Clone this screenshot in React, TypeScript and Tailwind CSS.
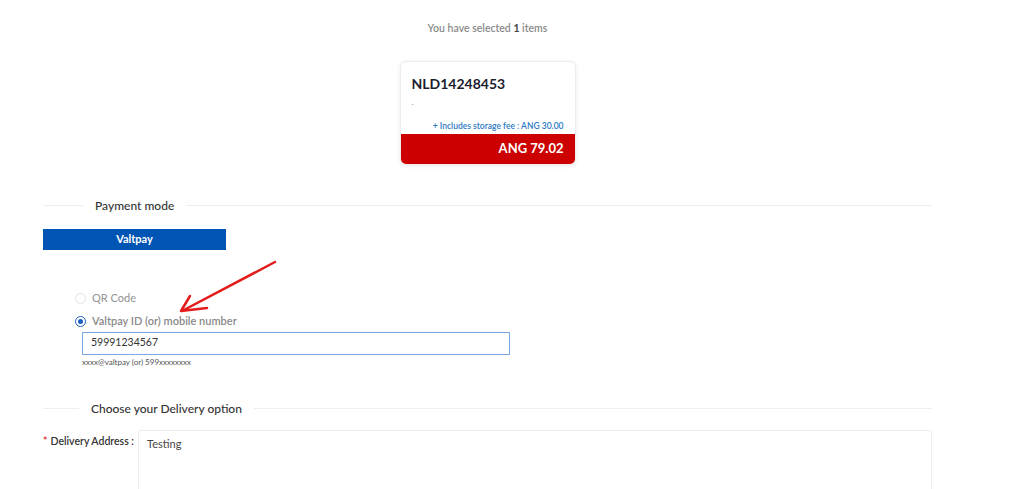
import React from 'react';

const Divider = ({ title, lead = 40 }: { title: string; lead?: number }) => (
  <div className="flex items-center">
    <div className={lead === 40 ? 'w-[40px] h-px bg-[#eeeeee]' : 'w-[36px] h-px bg-[#eeeeee]'} />
    <span className="px-[12px] text-[12px] text-[#333] font-medium">{title}</span>
    <div className="flex-1 h-px bg-[#eeeeee]" />
  </div>
);

const App: React.FC = () => {
  return (
    <div className="relative w-[975px] h-[489px] overflow-hidden bg-white font-['Lato','Liberation_Sans',sans-serif] text-[#333] px-[43px]">
      {/* Selected summary */}
      <div className="pt-[21px] text-center text-[10.5px] font-semibold text-[#8a8a8a]">
        You have selected <span className="font-bold text-[#444]">1</span> items
      </div>

      {/* Item card */}
      <div className="flex justify-center mt-[24px]">
        <div className="w-[176px] rounded-[6px] border border-[#ececec] shadow-[0_1px_4px_rgba(0,0,0,0.08)] overflow-hidden">
          <div className="px-[11px] pt-[13px] pb-[1px]">
            <div className="text-[14px] font-bold text-[#1c1c2e] leading-[18px]">NLD14248453</div>
            <div className="text-[9px] text-[#999] leading-[12px] mt-[3px]">.</div>
            <div className="text-right text-[8.5px] font-semibold text-[#2b79c2] mt-[12px]">
              + Includes storage fee : ANG 30.00
            </div>
          </div>
          <div className="h-[30px] bg-[#cc0000] flex items-center justify-end px-[11px] text-[13px] font-bold text-white">
            ANG 79.02
          </div>
        </div>
      </div>

      {/* Payment mode */}
      <div className="mt-[32px]">
        <Divider title="Payment mode" />
      </div>
      <button className="mt-[14px] w-[183px] h-[21px] bg-[#0054b4] text-white text-[11px] font-bold">
        Valtpay
      </button>

      <div className="pl-[32px] pt-[42px]">
        <label className="flex items-center gap-[6px] h-[13px] text-[11px] text-[#9a9a9a] font-medium">
          <span className="w-[11px] h-[11px] rounded-full border border-[#e2e2e2] bg-white" />
          QR Code
        </label>
        <label className="mt-[10px] flex items-center gap-[6px] h-[13px] text-[11px] text-[#8a8a8a] font-semibold">
          <span className="w-[11px] h-[11px] rounded-full border border-[#1a5fc0] flex items-center justify-center">
            <span className="w-[5px] h-[5px] rounded-full bg-[#1a5fc0]" />
          </span>
          Valtpay ID (or) mobile number
        </label>
        <div className="mt-[4px] ml-[7px] w-[428px] h-[23px] border border-[#7aa7e0] flex items-center px-[8px] text-[10.5px] text-[#333]">
          59991234567
        </div>
        <div className="ml-[7px] mt-[1px] text-[8px] text-[#555]">xxxx@valtpay (or) 599xxxxxxxx</div>
      </div>

      {/* Delivery */}
      <div className="mt-[32px]">
        <Divider title="Choose your Delivery option" lead={36} />
      </div>
      <div className="flex mt-[12px]">
        <div className="w-[95px] pt-[4px] text-[10.5px] font-semibold text-[#333] whitespace-nowrap">
          <span className="text-[#e02020] mr-[3px]">*</span>Delivery Address :
        </div>
        <div className="flex-1 h-[80px] border border-[#eeeeee] rounded-[2px] px-[8px] pt-[5px] text-[11px] text-[#444]">
          Testing
        </div>
      </div>

      {/* Annotation arrow */}
      <svg className="absolute left-0 top-0 pointer-events-none" width="975" height="489">
        <path d="M275 262 L182 311" stroke="#e41b1b" strokeWidth="2.5" strokeLinecap="round" fill="none" />
        <path d="M190 296 L181 311 L207 308" stroke="#e41b1b" strokeWidth="2.5" strokeLinecap="round" strokeLinejoin="round" fill="none" />
      </svg>
    </div>
  );
};

export default App;
